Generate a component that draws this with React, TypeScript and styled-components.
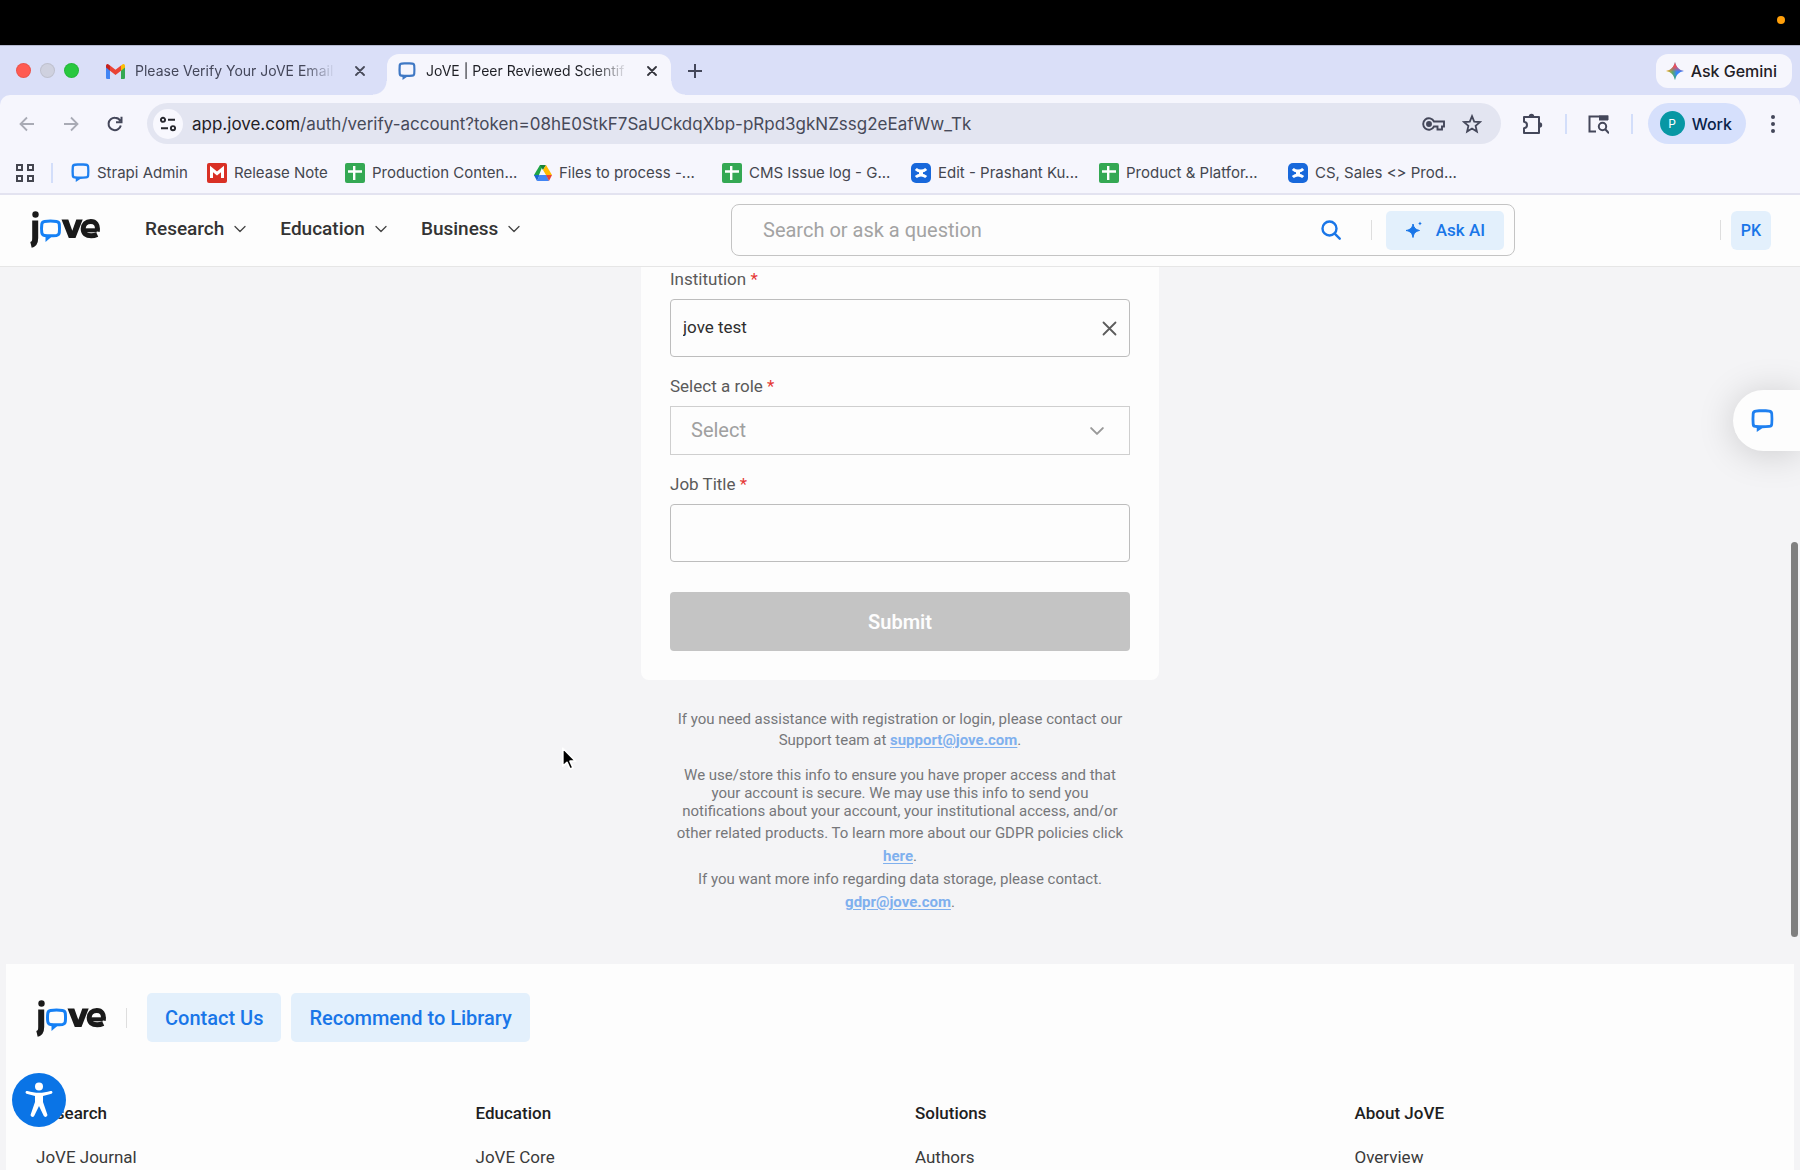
import React from "react";
import styled, { createGlobalStyle } from "styled-components";

const chrome = `Inter, "Liberation Sans", sans-serif`;
const web = `Roboto, "Liberation Sans", sans-serif`;

const GlobalStyle = createGlobalStyle`
  *, *::before, *::after { box-sizing: border-box; }
  body { margin: 0; overflow: hidden; font-family: ${web}; }
  button, input, select { font: inherit; color: inherit; margin: 0; }
  button { border: 0; padding: 0; background: none; display: flex; align-items: center; justify-content: center; }
  p, h3, ul { margin: 0; padding: 0; }
  a { text-decoration: none; color: inherit; }
  svg { display: block; flex: none; }
`;

const Screen = styled.div`
  display: flex;
  flex-direction: column;
  height: 100vh;
  overflow: hidden;
  background: #f4f4f6;
`;

const MenuBar = styled.div`
  flex: none;
  height: 45px;
  padding: 0 15px;
  background: #000;
  display: flex;
  align-items: center;
  justify-content: flex-end;
`;

const RecordingDot = styled.span`
  width: 8px;
  height: 8px;
  margin-bottom: 6px;
  border-radius: 50%;
  background: #ff9f0a;
`;

const TabStrip = styled.div`
  flex: none;
  height: 50px;
  padding: 8px 8px 0 16px;
  display: flex;
  background: #dadff8;
  border-top: 1px solid #b4b8cf;
  font-family: ${chrome};
  font-size: 14px;
`;

const Lights = styled.div`
  display: flex;
  gap: 9px;
  height: 33px;
  align-items: center;
  width: 90px;
`;

const Light = styled.span<{ $color: string }>`
  width: 15px;
  height: 15px;
  border-radius: 50%;
  background: ${(p) => p.$color};
  box-shadow: inset 0 0 0 1px rgba(0, 0, 0, 0.08);
`;

const Tab = styled.div<{ $active?: boolean }>`
  position: relative;
  display: flex;
  align-items: center;
  gap: 10px;
  width: ${(p) => (p.$active ? 284 : 281)}px;
  height: ${(p) => (p.$active ? 41 : 34)}px;
  padding: ${(p) => (p.$active ? "0 9px 7px 11px" : "0 17px 0 0")};
  border-radius: 12px 12px 0 0;
  color: ${(p) => (p.$active ? "#1f2026" : "#44475a")};
  background: ${(p) => (p.$active ? "#f6f6fd" : "transparent")};
  &::before, &::after {
    content: "";
    display: ${(p) => (p.$active ? "block" : "none")};
    position: absolute;
    bottom: 0;
    width: 14px;
    height: 14px;
  }
  &::before { left: -14px; background: radial-gradient(circle at 0 0, transparent 13px, #f6f6fd 14px); }
  &::after { right: -14px; background: radial-gradient(circle at 100% 0, transparent 13px, #f6f6fd 14px); }
`;

const TabTitle = styled.span`
  flex: 1;
  white-space: nowrap;
  line-height: 20px;
  mask-image: linear-gradient(to right, #000 82%, transparent 98%);
`;

const TabButton = styled.button`
  width: 20px;
  height: 20px;
`;

const NewTab = styled.button`
  width: 20px;
  height: 33px;
  margin-left: 14px;
`;

const AskGemini = styled.button`
  height: 34px;
  margin-left: auto;
  padding: 0 15px 0 10px;
  gap: 7px;
  border-radius: 12px;
  background: #f6f6fd;
  color: #1f2026;
  font-size: 16px;
  font-weight: 500;
`;

const Toolbar = styled.div`
  flex: none;
  display: flex;
  align-items: center;
  height: 57px;
  padding: 0 15px;
  background: #f6f6fd;
  border-radius: 10px 10px 0 0;
  font-family: ${chrome};
`;

const ToolbarBack = styled.div`
  flex: none;
  background: #dadff8;
`;

const ToolButton = styled.button<{ $wide?: boolean }>`
  width: ${(p) => (p.$wide ? 64 : 44)}px;
  height: 36px;
`;

const NavButtons = styled.div`
  display: flex;
  width: 132px;
  margin-left: -10px;
`;

const AddressBar = styled.div`
  flex: 1;
  display: flex;
  align-items: center;
  height: 41px;
  margin-left: 10px;
  padding: 0 10px 0 6px;
  border-radius: 21px;
  background: #e3e5f1;
`;

const SiteInfo = styled.button`
  width: 30px;
  height: 30px;
  border-radius: 50%;
  background: #f8f8fe;
`;

const Url = styled.div`
  flex: 1;
  margin-left: 9px;
  font-size: 17px;
  line-height: 24px;
  color: #474a59;
  white-space: nowrap;
  b { font-weight: 400; color: #1f2026; }
`;

const UrlButton = styled.button`
  width: 38px;
  height: 36px;
`;

const Divider = styled.span<{ $color: string; $height: number }>`
  flex: none;
  width: 2px;
  height: ${(p) => p.$height}px;
  background: ${(p) => p.$color};
`;

const Profile = styled.button`
  height: 41px;
  margin-left: 15px;
  padding: 0 14px 0 12px;
  gap: 7px;
  border-radius: 21px;
  background: #d6e0fc;
  color: #0a1f4a;
  font-size: 16px;
  font-weight: 500;
`;

const Avatar = styled.span`
  width: 25px;
  height: 25px;
  border-radius: 50%;
  background: #0797a4;
  color: #fff;
  font-size: 12px;
  font-weight: 400;
  line-height: 25px;
`;

const MenuButton = styled.button`
  width: 30px;
  height: 36px;
  margin-left: 12px;
  margin-right: -3px;
`;

const Bookmarks = styled.nav`
  flex: none;
  display: flex;
  align-items: center;
  height: 43px;
  padding: 0 16px;
  background: #f6f6fd;
  border-bottom: 2px solid #e3e3f0;
  font-family: ${chrome};
  font-size: 15px;
  color: #44464f;
`;

const Apps = styled.button`
  width: 18px;
  height: 24px;
  margin-right: 17px;
`;

const Bookmark = styled.a<{ $width: number }>`
  display: flex;
  align-items: center;
  gap: 7px;
  width: ${(p) => p.$width}px;
  line-height: 20px;
  white-space: nowrap;
`;

const BookmarkList = styled.div`
  display: flex;
  margin-left: 18px;
`;

const Page = styled.div`
  position: relative;
  flex: 1;
  min-height: 0;
  overflow: hidden;
`;

const SiteHeader = styled.header`
  display: flex;
  align-items: center;
  height: 72px;
  padding: 0 29px 3px 30px;
  background: #fdfdfd;
  border-bottom: 1px solid #e6e6e6;
`;

const SiteNav = styled.nav`
  display: flex;
  gap: 34px;
  width: 586px;
  margin-left: 45px;
`;

const NavItem = styled.button`
  gap: 10px;
  font-size: 19px;
  font-weight: 500;
  line-height: 24px;
  color: #333;
`;

const SearchBox = styled.div`
  display: flex;
  align-items: center;
  flex: 0 1 784px;
  height: 52px;
  margin-top: 2px;
  padding: 0 10px 0 31px;
  border: 1px solid #c4c4c4;
  border-radius: 8px;
`;

const SearchInput = styled.input`
  flex: 1;
  min-width: 0;
  height: 40px;
  padding: 0;
  border: 0;
  outline: 0;
  background: transparent;
  font-size: 20px;
  &::placeholder { color: #a3a3a3; opacity: 1; }
`;

const SearchButton = styled.button`
  width: 24px;
  height: 32px;
  margin-right: 28px;
`;

const ThinLine = styled.span<{ $gap: number }>`
  flex: none;
  width: 1px;
  height: 20px;
  margin-right: ${(p) => p.$gap}px;
  background: #dedede;
`;

const SoftButton = styled.button<{ $height: number; $pad: number; $size: number }>`
  gap: 13px;
  height: ${(p) => p.$height}px;
  padding: 0 ${(p) => p.$pad}px;
  border-radius: 5px;
  background: #e3f0fc;
  color: #1976e8;
  font-size: ${(p) => p.$size}px;
  font-weight: 500;
`;

const Account = styled.div`
  display: flex;
  align-items: center;
  margin: 2px 0 0 auto;
`;

const Initials = styled.button`
  width: 40px;
  height: 39px;
  border-radius: 6px;
  background: #e3f0fc;
  color: #1976e8;
  font-size: 16px;
  font-weight: 500;
`;

const Main = styled.main`
  display: flex;
  flex-direction: column;
  align-items: center;
  padding-bottom: 50px;
`;

const Card = styled.form`
  display: flex;
  flex-direction: column;
  gap: 17px;
  width: 518px;
  max-width: 100%;
  padding: 0 29px 29px;
  background: #fdfdfd;
  border-radius: 0 0 8px 8px;
`;

const Field = styled.div`
  display: flex;
  flex-direction: column;
  gap: 8px;
`;

const Label = styled.label`
  font-size: 17px;
  line-height: 24px;
  color: #5a5a5a;
  span { color: #e53935; }
`;

const InputFrame = styled.div`
  display: flex;
  align-items: center;
  height: 58px;
  padding: 0 12px;
  border: 1px solid #bdbdbd;
  border-radius: 4px;
`;

const TextInput = styled.input`
  flex: 1;
  min-width: 0;
  height: 40px;
  padding: 0 0 2px;
  border: 0;
  outline: 0;
  background: transparent;
  font-size: 17px;
  color: #2e2e2e;
`;

const ClearButton = styled.button`
  width: 16px;
  height: 24px;
`;

const SelectFrame = styled.div`
  display: grid;
  grid-template-columns: 1fr 14px;
  align-items: center;
  height: 49px;
  padding-right: 25px;
  border: 1px solid #cfcfcf;
`;

const Select = styled.select`
  grid-area: 1 / 1 / 2 / 3;
  appearance: none;
  height: 47px;
  padding: 0 20px 1px;
  border: 0;
  outline: 0;
  background: transparent;
  font-size: 20px;
  color: #a0a0a0;
`;

const SelectArrow = styled.span`
  grid-area: 1 / 2 / 2 / 3;
  pointer-events: none;
`;

const Submit = styled.button`
  height: 59px;
  margin-top: 13px;
  border-radius: 4px;
  background: #c4c4c4;
  color: #fdfdfd;
  font-size: 20px;
  font-weight: 600;
`;

const Help = styled.section`
  padding-top: 29px;
  text-align: center;
  color: #76777a;
  font-size: 15px;
`;

const HelpText = styled.p<{ $line: number; $after?: number }>`
  line-height: ${(p) => p.$line}px;
  margin-bottom: ${(p) => p.$after || 0}px;
`;

const HelpLink = styled.a`
  color: #7fb0ee;
  font-weight: 700;
  text-decoration: underline;
  text-underline-offset: 2px;
`;

const Footer = styled.footer`
  margin: 0 6px;
  padding: 29px 30px;
  background: #fdfdfd;
`;

const FooterTop = styled.div`
  display: flex;
  align-items: center;
  gap: 10px;
  margin-bottom: 59px;
`;

const FooterBrand = styled.div`
  display: flex;
  align-items: center;
  gap: 20px;
`;

const FooterColumns = styled.div`
  display: grid;
  grid-template-columns: repeat(4, 1fr);
  gap: 30px;
`;

const ColumnTitle = styled.h3`
  font-size: 17px;
  font-weight: 500;
  line-height: 24px;
  color: #1f1f1f;
  margin-bottom: 20px;
`;

const ColumnLink = styled.a`
  display: block;
  font-size: 17px;
  line-height: 24px;
  color: #3a3a3a;
`;

const ChatTab = styled.button`
  position: absolute;
  top: 195px;
  right: 0;
  width: 67px;
  height: 61px;
  padding-right: 9px;
  border-radius: 31px 0 0 31px;
  background: #fdfdfd;
  box-shadow: 0 3px 36px rgba(0, 0, 0, 0.17);
`;

const AccessButton = styled.button`
  position: absolute;
  left: 12px;
  bottom: 43px;
  width: 54px;
  height: 54px;
  border-radius: 50%;
  background: #0a74e6;
`;

const ScrollThumb = styled.span`
  position: absolute;
  right: 2px;
  top: 347px;
  width: 7px;
  height: 395px;
  border-radius: 4px;
  background: #808080;
`;

const Pointer = styled.span`
  position: absolute;
  left: 560px;
  top: 551px;
`;

const CloseIcon = ({ size = 10, color = "#33343c", w = 1.8 }) => (
  <svg width={size} height={size} viewBox="0 0 10 10" stroke={color} strokeWidth={w} strokeLinecap="round">
    <path d="M1 1l8 8M9 1L1 9" />
  </svg>
);

const Caret = ({ size = 12, color = "#444", w = 1.3 }) => (
  <svg width={size} height={size} viewBox="0 0 12 12" fill="none" stroke={color} strokeWidth={w} strokeLinecap="round" strokeLinejoin="round">
    <path d="M1 3.5l5 5 5-5" />
  </svg>
);

const Bubble = ({ size = 19, color = "#1f80f0" }) => (
  <svg width={size} height={size} viewBox="0 0 20 20">
    <path
      fill={color}
      fillRule="evenodd"
      d="M4 .6C8 .2 12 .2 16 .6c1.900.2 3 1.300 3.200 3 .3 3.300.3 6.500 0 9.800-.2 1.900-1.300 2.800-3.200 3-2.200.2-4.200.3-6.200.4L5 20v-3.400l-1.400-.2c-1.800-.2-2.700-1.200-2.900-3C.4 10.200.4 6.900.7 3.600.9 1.800 2.200.8 4 .6zM4.500 3.100c-.9.1-1.300.5-1.400 1.300-.2 2.800-.2 5.500 0 8.200.1.900.5 1.300 1.400 1.400 3.600.3 7.300.3 11 0 .9-.1 1.300-.5 1.400-1.400.2-2.700.2-5.400 0-8.200-.1-.8-.5-1.200-1.400-1.300-3.700-.3-7.400-.3-11 0z"
    />
  </svg>
);

const JoveLogo = () => (
  <svg width="70" height="38" viewBox="0 0 70 38" role="img" aria-label="jove">
    <circle cx="5.500" cy="4.500" r="3.200" fill="#1a1a1a" />
    <path d="M5.200 10.500v17.500c0 4-.8 6-4.200 6.800" fill="none" stroke="#1a1a1a" strokeWidth="6" />
    <path d="M14.500 11.500c4-.6 8-.6 12 0 1.800.3 2.600 1 2.800 2.700.3 2.900.3 5.500 0 8.400-.2 1.700-1.100 2.500-2.800 2.800-4 .6-8 .6-12 0-1.800-.3-2.500-1.100-2.700-2.800-.4-2.900-.4-5.500 0-8.400.2-1.700 1-2.400 2.700-2.700z" fill="none" stroke="#1580f5" strokeWidth="3" />
    <path d="M15.500 25.500V32l7-6z" fill="#1580f5" />
    <path d="M31.500 9.500h6.800l4 11.300 4-11.300h6.400L45.500 28h-6.700z" fill="#1a1a1a" />
    <path d="M66.800 20.300H53.900" stroke="#1a1a1a" strokeWidth="4" />
    <path d="M67.200 21.500c1.200-7-2-10-6.400-10-4.700 0-7.600 3-7.600 7.300 0 4.600 3 7 8 7 2.200 0 4-.4 6-1.300" fill="none" stroke="#1a1a1a" strokeWidth="5" />
  </svg>
);

const GmailIcon = () => (
  <svg width="19" height="15" viewBox="0 0 19 15">
    <path fill="#4285f4" d="M0 2.500L4 5.500V15H1.300A1.300 1.300 0 010 13.700z" />
    <path fill="#34a853" d="M15 5.500l4-3v11.200c0 .7-.6 1.300-1.300 1.300H15z" />
    <path fill="#fbbc04" d="M15 1.500l1.500-1.100C17.600-.4 19 .4 19 2v1.500l-4 3.200z" />
    <path fill="#c5221f" d="M0 2C0 .4 1.400-.4 2.500.4L4 1.500v5.200L0 3.500z" />
    <path fill="#ea4335" d="M4 1.500l5.500 4.200L15 1.500v5.200l-5.500 4.200L4 6.700z" />
  </svg>
);

const SheetIcon = () => (
  <svg width="20" height="20" viewBox="0 0 20 20">
    <rect width="20" height="20" rx="2" fill="#34a853" />
    <path d="M9.200 3v14M3 8.500h14" stroke="#fff" strokeWidth="2.400" />
  </svg>
);

const RedMIcon = () => (
  <svg width="20" height="20" viewBox="0 0 20 20">
    <rect width="20" height="20" rx="2" fill="#d93025" />
    <path d="M4.500 15V6l5.500 4.500L15.500 6v9" fill="none" stroke="#fff" strokeWidth="3" />
  </svg>
);

const DriveIcon = () => (
  <svg width="18" height="18" viewBox="0 0 18 18">
    <path fill="#1ea446" d="M6 1h3l-4 10-2 4-3-4z" />
    <path fill="#188038" d="M6 1h6L9 6z" />
    <path fill="#ffba00" d="M12 1l6 10h-6L9 6z" />
    <path fill="#4285f4" d="M5.500 11h7l2.500 6H3z" />
    <path fill="#1967d2" d="M0 11h5.500L3 17z" />
    <path fill="#ea4335" d="M12 11h6l-3 6z" />
  </svg>
);

const ConfluenceIcon = () => (
  <svg width="20" height="20" viewBox="0 0 20 20">
    <rect width="20" height="20" rx="5" fill="#1868db" />
    <path d="M4.800 6c3 2.800 7.400 2.800 10.400 0M4.800 14c3-2.800 7.400-2.800 10.400 0" fill="none" stroke="#fff" strokeWidth="3" />
    <path d="M8 8h4v4H8z" fill="#fff" />
  </svg>
);

const GeminiIcon = () => (
  <svg width="18" height="20" viewBox="0 0 20 20">
    <defs>
      <linearGradient id="gemini" x1="0" y1=".5" x2="1" y2=".5">
        <stop offset="0" stopColor="#fbbc04" />
        <stop offset=".38" stopColor="#57a773" />
        <stop offset=".6" stopColor="#3186ff" />
        <stop offset="1" stopColor="#3a7cf5" />
      </linearGradient>
      <linearGradient id="geminiTop" x1="0" y1="0" x2="0" y2="1">
        <stop offset="0" stopColor="#ee4d5d" />
        <stop offset=".25" stopColor="#ee4d5d" />
        <stop offset=".55" stopColor="#ee4d5d" stopOpacity="0" />
        <stop offset=".7" stopColor="#34a853" stopOpacity="0" />
        <stop offset="1" stopColor="#17a862" />
      </linearGradient>
    </defs>
    <path fill="url(#gemini)" d="M10 0c1 5.500 4.500 9 10 10-5.500 1-9 4.500-10 10-1-5.500-4.500-9-10-10 5.500-1 9-4.500 10-10z" />
    <path fill="url(#geminiTop)" d="M10 0c1 5.500 4.500 9 10 10-5.500 1-9 4.500-10 10-1-5.500-4.500-9-10-10 5.500-1 9-4.500 10-10z" />
  </svg>
);

const bookmarks = [
  { text: "Strapi Admin", icon: <Bubble size={19} />, width: 136 },
  { text: "Release Note", icon: <RedMIcon />, width: 138 },
  { text: "Production Conten...", icon: <SheetIcon />, width: 189 },
  { text: "Files to process -...", icon: <DriveIcon />, width: 188 },
  { text: "CMS Issue log - G...", icon: <SheetIcon />, width: 189 },
  { text: "Edit - Prashant Ku...", icon: <ConfluenceIcon />, width: 188 },
  { text: "Product & Platfor...", icon: <SheetIcon />, width: 189 },
  { text: "CS, Sales <> Prod...", icon: <ConfluenceIcon />, width: 188 },
];

const columns = [
  ["Research", "JoVE Journal"],
  ["Education", "JoVE Core"],
  ["Solutions", "Authors"],
  ["About JoVE", "Overview"],
];

export default function App() {
  return (
    <Screen>
      <GlobalStyle />
      <MenuBar><RecordingDot /></MenuBar>

      <TabStrip>
        <Lights>
          <Light $color="#ff5b52" />
          <Light $color="#cfd1df" />
          <Light $color="#28c83f" />
        </Lights>
        <Tab>
          <GmailIcon />
          <TabTitle>Please Verify Your JoVE Email</TabTitle>
          <TabButton aria-label="Close tab"><CloseIcon color="#474a59" /></TabButton>
        </Tab>
        <Tab $active>
          <Bubble size={18} color="#3f78c4" />
          <TabTitle>JoVE | Peer Reviewed Scientif</TabTitle>
          <TabButton aria-label="Close tab"><CloseIcon /></TabButton>
        </Tab>
        <NewTab aria-label="New tab">
          <svg width="14" height="14" viewBox="0 0 14 14" stroke="#44475a" strokeWidth="2"><path d="M7 0v14M0 7h14" /></svg>
        </NewTab>
        <AskGemini><GeminiIcon />Ask Gemini</AskGemini>
      </TabStrip>

      <ToolbarBack>
        <Toolbar>
          <NavButtons>
            <ToolButton aria-label="Back">
              <svg width="16" height="16" viewBox="0 0 16 16" fill="none" stroke="#a9abb5" strokeWidth="1.800"><path d="M15 8H2M8 1.500L1.500 8 8 14.500" /></svg>
            </ToolButton>
            <ToolButton aria-label="Forward">
              <svg width="16" height="16" viewBox="0 0 16 16" fill="none" stroke="#a9abb5" strokeWidth="1.800"><path d="M1 8h13M8 1.500L14.500 8 8 14.500" /></svg>
            </ToolButton>
            <ToolButton aria-label="Reload">
              <svg width="16" height="16" viewBox="0 0 16 16" fill="none" stroke="#44475a" strokeWidth="2"><path d="M13.800 9.500A6.200 6.200 0 118 1.800c2.200 0 4 1 5.500 3M14.500.8v5.400H9" /></svg>
            </ToolButton>
          </NavButtons>
          <AddressBar>
            <SiteInfo aria-label="Site information">
              <svg width="16" height="16" viewBox="0 0 16 16" fill="none" stroke="#26272e" strokeWidth="1.900"><circle cx="3" cy="3.800" r="2.100" /><path d="M8 3.800h7M1 12.200h7" /><circle cx="13" cy="12.200" r="2.100" /></svg>
            </SiteInfo>
            <Url><b>app.jove.com</b>/auth/verify-account?token=08hE0StkF7SaUCkdqXbp-pRpd3gkNZssg2eEafWw_Tk</Url>
            <UrlButton aria-label="Passwords">
              <svg width="23" height="14" viewBox="0 0 23 14" fill="none" stroke="#44475a" strokeWidth="1.900"><path d="M12 4.500A5.700 5.700 0 1012 9.500h3.500v3H20v-3h2V4.500z" /><circle cx="7" cy="7" r="2" fill="#44475a" /></svg>
            </UrlButton>
            <UrlButton aria-label="Bookmark this page">
              <svg width="20" height="20" viewBox="0 0 20 20" fill="none" stroke="#44475a" strokeWidth="1.800"><path d="M10 2.200l2.200 5.400 5.800.5-4.400 3.800 1.300 5.700L10 14.600l-4.900 3 1.300-5.700L2 8.100l5.800-.5z" /></svg>
            </UrlButton>
          </AddressBar>
          <ToolButton $wide aria-label="Extensions">
            <svg width="21" height="22" viewBox="0 0 21 22"><path d="M2 4h15v16H2v-4.800c4-.4 4-6 0-6.400z" fill="none" stroke="#44475a" strokeWidth="2" strokeLinejoin="round" /><path d="M6.800 3.500a2.700 2.700 0 015.400 0zM17.500 9.300a2.700 2.700 0 010 5.400z" fill="#44475a" /></svg>
          </ToolButton>
          <Divider $color="#d3defa" $height={20} />
          <ToolButton $wide aria-label="Search tabs">
            <svg width="21" height="20" viewBox="0 0 21 20" fill="none" stroke="#44475a" strokeWidth="2"><path d="M8 17.500H1.500v-15h18V6" /><path d="M11 1.500h9v5h-9z" fill="#44475a" stroke="none" /><circle cx="14.500" cy="12.500" r="3.700" /><path d="M17 15l4 4.200" /></svg>
          </ToolButton>
          <Divider $color="#d3defa" $height={20} />
          <Profile><Avatar>P</Avatar>Work</Profile>
          <MenuButton aria-label="Menu">
            <svg width="4" height="18" viewBox="0 0 4 18" fill="#44475a"><circle cx="2" cy="2" r="2" /><circle cx="2" cy="9" r="2" /><circle cx="2" cy="16" r="2" /></svg>
          </MenuButton>
        </Toolbar>
      </ToolbarBack>

      <Bookmarks>
        <Apps aria-label="Apps">
          <svg width="18" height="18" viewBox="0 0 18 18" fill="none" stroke="#44464f" strokeWidth="2"><path d="M1 1h5v5H1zM12 1h5v5h-5zM1 12h5v5H1zM12 12h5v5h-5z" /></svg>
        </Apps>
        <Divider $color="#d3defa" $height={20} />
        <BookmarkList>
          {bookmarks.map((b) => (
            <Bookmark key={b.text} href="#" $width={b.width}>{b.icon}{b.text}</Bookmark>
          ))}
        </BookmarkList>
      </Bookmarks>

      <Page>
        <SiteHeader>
          <JoveLogo />
          <SiteNav>
            <NavItem>Research<Caret /></NavItem>
            <NavItem>Education<Caret /></NavItem>
            <NavItem>Business<Caret /></NavItem>
          </SiteNav>
          <SearchBox>
            <SearchInput aria-label="Search" placeholder="Search or ask a question" />
            <SearchButton aria-label="Search">
              <svg width="20" height="20" viewBox="0 0 20 20" fill="none" stroke="#1976e8" strokeWidth="2.400" strokeLinecap="round"><circle cx="8.500" cy="8.500" r="7" /><path d="M13.700 13.700l5 5" /></svg>
            </SearchButton>
            <ThinLine $gap={14} />
            <SoftButton $height={39} $pad={19} $size={17}>
              <svg width="18" height="18" viewBox="0 0 18 18" fill="#1976e8"><path d="M8 3c.9 4 2.500 5.600 6.500 6.500C10.500 10.400 8.900 12 8 16.500 7.100 12 5.500 10.400 1 9.500 5.500 8.600 7.100 7 8 3z" stroke="#1976e8" strokeLinejoin="round" /><path d="M15 .5c.3 1.200.8 1.700 2 2-1.200.3-1.700.8-2 2-.3-1.200-.8-1.700-2-2 1.200-.3 1.700-.8 2-2z" /></svg>
              Ask AI
            </SoftButton>
          </SearchBox>
          <Account>
            <ThinLine $gap={10} />
            <Initials>PK</Initials>
          </Account>
        </SiteHeader>

        <Main>
          <Card>
            <Field>
              <Label htmlFor="institution">Institution <span>*</span></Label>
              <InputFrame>
                <TextInput id="institution" defaultValue="jove test" />
                <ClearButton type="button" aria-label="Clear"><CloseIcon size={15} color="#5c5c5c" w={1.2} /></ClearButton>
              </InputFrame>
            </Field>
            <Field>
              <Label htmlFor="role">Select a role <span>*</span></Label>
              <SelectFrame>
                <Select id="role"><option>Select</option></Select>
                <SelectArrow><Caret size={14} color="#999" w={1.7} /></SelectArrow>
              </SelectFrame>
            </Field>
            <Field>
              <Label htmlFor="job">Job Title <span>*</span></Label>
              <InputFrame><TextInput id="job" /></InputFrame>
            </Field>
            <Submit type="button">Submit</Submit>
          </Card>

          <Help>
            <HelpText $line={21} $after={15}>
              If you need assistance with registration or login, please contact our<br />
              Support team at <HelpLink href="#">support@jove.com</HelpLink>.
            </HelpText>
            <HelpText $line={18} $after={2}>
              We use/store this info to ensure you have proper access and that<br />
              your account is secure. We may use this info to send you<br />
              notifications about your account, your institutional access, and/or
            </HelpText>
            <HelpText $line={23}>
              other related products. To learn more about our GDPR policies click<br />
              <HelpLink href="#">here</HelpLink>.<br />
              If you want more info regarding data storage, please contact.<br />
              <HelpLink href="#">gdpr@jove.com</HelpLink>.
            </HelpText>
          </Help>
        </Main>

        <Footer>
          <FooterTop>
            <FooterBrand>
              <JoveLogo />
              <ThinLine $gap={10} />
            </FooterBrand>
            <SoftButton $height={49} $pad={18} $size={20}>Contact Us</SoftButton>
            <SoftButton $height={49} $pad={18} $size={20}>Recommend to Library</SoftButton>
          </FooterTop>
          <FooterColumns>
            {columns.map(([title, link]) => (
              <div key={title}>
                <ColumnTitle>{title}</ColumnTitle>
                <ColumnLink href="#">{link}</ColumnLink>
              </div>
            ))}
          </FooterColumns>
        </Footer>

        <ChatTab aria-label="Open chat"><Bubble size={23} /></ChatTab>
        <AccessButton aria-label="Accessibility">
          <svg width="28" height="36" viewBox="0 0 28 36" fill="#fff"><circle cx="14" cy="4.500" r="4" /><path d="M2.500 9c7.500 2.400 15.500 2.400 23 0 2-.6 2.800 2 1 2.700L18 14v6l4.300 12.500c.7 2.300-2.600 3.500-3.600 1.300L14 24 9.300 33.800c-1 2.200-4.300 1-3.600-1.300L10 20v-6l-8.500-2.300C-.3 11 .5 8.400 2.500 9z" /></svg>
        </AccessButton>
        <ScrollThumb />
        <Pointer>
          <svg width="18" height="27" viewBox="0 0 16 24"><path d="M2.500 2v16l3.700-3.500 2.700 6 2.600-1.200L8.900 13.500h5z" fill="#000" stroke="#fff" strokeWidth="1.500" strokeLinejoin="round" /></svg>
        </Pointer>
      </Page>
    </Screen>
  );
}
